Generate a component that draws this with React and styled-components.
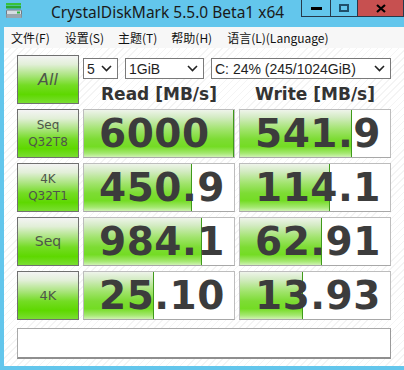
import React from 'react';
import styled, { createGlobalStyle } from 'styled-components';

const GlobalStyle = createGlobalStyle`
  html, body {
    margin: 0;
    padding: 0;
    background: #ffffff;
  }
`;

const Window = styled.div`
  width: 404px;
  height: 370px;
  background: #63c6ec;
  display: flex;
  flex-direction: column;
  overflow: hidden;
  font-family: 'Liberation Sans', Arial, sans-serif;
`;

const TitleBar = styled.div`
  height: 27px;
  display: flex;
  align-items: flex-start;
  flex-shrink: 0;
`;

const AppIcon = styled.svg`
  margin: 3px 0 0 6px;
  flex-shrink: 0;
`;

const TitleText = styled.div`
  margin: 1px 0 0 29px;
  font-family: 'Noto Sans', 'Open Sans', sans-serif;
  font-size: 15.5px;
  line-height: 22px;
  color: #1a1a1a;
  flex: 1;
  white-space: nowrap;
`;

const Caption = styled.div`
  display: flex;
  height: 17px;
`;

const CaptionButton = styled.div`
  width: ${p => p.$w}px;
  height: 16px;
  border: 1px solid #26394a;
  border-top: none;
  border-right: ${p => (p.$last ? '1px solid #26394a' : 'none')};
  background: ${p => (p.$close ? '#c75050' : 'transparent')};
  display: flex;
  align-items: center;
  justify-content: center;
`;

const Body = styled.div`
  flex: 1;
  display: flex;
  flex-direction: column;
  padding: 0 0 4px 4px;
  min-height: 0;
`;

const MenuBar = styled.div`
  height: 21px;
  background: #f7f7f7;
  display: flex;
  align-items: center;
  padding-left: 2px;
  font-family: 'Noto Sans CJK SC', 'Liberation Sans', sans-serif;
  font-size: 12px;
  color: #111;
  flex-shrink: 0;
`;

const MenuItem = styled.span`
  padding: 0 7px 0 5px;
  margin-right: ${p => p.$gap || 0}px;
  line-height: 21px;
`;

const Content = styled.div`
  flex: 1;
  padding: 7px 0 0 13px;
  background: repeating-linear-gradient(
    135deg,
    #ffffff 0px,
    #ffffff 4px,
    #f4f4f4 4px,
    #f4f4f4 5px
  );
`;

const Board = styled.div`
  display: grid;
  grid-template-columns: 62px 152px 152px;
  grid-auto-rows: 49px;
  column-gap: 4px;
  row-gap: 5px;
`;

const LabelButton = styled.div`
  box-sizing: border-box;
  border: 1px solid #707070;
  background: linear-gradient(
    to bottom,
    #f4f4f4 0%,
    #e2efd8 18%,
    #a8e47a 42%,
    #74dc24 62%,
    #5ed800 82%,
    #7ade32 100%
  );
  display: flex;
  flex-direction: column;
  align-items: center;
  justify-content: center;
  color: #4e564a;
  font-family: 'DejaVu Sans', Verdana, sans-serif;
  font-size: ${p => p.$size || 12}px;
  font-style: ${p => (p.$italic ? 'italic' : 'normal')};
  line-height: 17px;
`;

const Controls = styled.div`
  grid-column: 2 / 4;
  display: flex;
  flex-direction: column;
`;

const SelectRow = styled.div`
  display: flex;
  gap: 7px;
  margin-top: 3px;
`;

const Select = styled.div`
  box-sizing: border-box;
  width: ${p => p.$w}px;
  height: 21px;
  border: 1px solid #7a7a7a;
  background: #ffffff;
  display: flex;
  align-items: center;
  padding: 0 5px 0 3px;
  font-size: 14px;
  color: #1e1e1e;
`;

const SelectText = styled.span`
  flex: 1;
  white-space: nowrap;
`;

const HeaderRow = styled.div`
  display: grid;
  grid-template-columns: 152px 152px;
  column-gap: 4px;
  margin-top: 4px;
`;

const ColumnHeader = styled.div`
  text-align: center;
  font-family: 'DejaVu Sans', Verdana, sans-serif;
  font-weight: bold;
  font-size: 17px;
  line-height: 22px;
  color: #333333;
`;

const Cell = styled.div`
  position: relative;
  box-sizing: border-box;
  border: 1px solid #bdbdbd;
  border-bottom-color: #a8a8a8;
  background: #ffffff;
  overflow: hidden;
`;

const Fill = styled.div`
  position: absolute;
  left: 0;
  top: 0;
  bottom: 0;
  box-sizing: border-box;
  border-right: 1px solid #3f9a1a;
  background: linear-gradient(
    to bottom,
    #eef4ea 0%,
    #d3ebc2 16%,
    #a3e470 40%,
    #7ddc34 62%,
    #74dc24 78%,
    #a4e870 92%,
    #cff2b4 100%
  );
`;

const Value = styled.div`
  position: relative;
  height: 100%;
  display: flex;
  align-items: center;
  padding-left: 15px;
  font-family: 'DejaVu Sans', Verdana, sans-serif;
  font-weight: bold;
  font-size: 39px;
  letter-spacing: 0.5px;
  color: #3c3c3c;
`;

const Comment = styled.div`
  box-sizing: border-box;
  width: 374px;
  height: 31px;
  margin-top: 8px;
  background: #ffffff;
  border: 1px solid #a9a9a9;
  border-bottom: 2px solid #8f8f8f;
  border-right-color: #9a9a9a;
`;

const Chevron = () => (
  <svg width="11" height="7" viewBox="0 0 11 7">
    <path d="M1 1 L5.5 5.5 L10 1" fill="none" stroke="#222" strokeWidth="1.6" />
  </svg>
);

const rows = [
  { label: ['Seq', 'Q32T8'], size: 12, read: '6000', readPct: 100, write: '541.9', writePct: 74.7 },
  { label: ['4K', 'Q32T1'], size: 12, read: '450.9', readPct: 72, write: '114.1', writePct: 60 },
  { label: ['Seq'], size: 14, read: '984.1', readPct: 78.7, write: '62.91', writePct: 54.7 },
  { label: ['4K'], size: 13, read: '25.10', readPct: 46.7, write: '13.93', writePct: 42 }
];

const ScoreCell = ({ value, pct }) => (
  <Cell>
    <Fill style={{ width: `${pct}%` }} />
    <Value>{value}</Value>
  </Cell>
);

const App = () => (
  <>
    <GlobalStyle />
    <Window>
      <TitleBar>
        <AppIcon width="16" height="15" viewBox="0 0 16 15">
          <rect x="0" y="0" width="15" height="2.5" fill="#38c23a" />
          <rect x="0" y="3" width="15" height="2.5" fill="#2aa830" />
          <rect x="0.5" y="7" width="15" height="8" rx="1" fill="#d6dde2" stroke="#6d7a84" />
          <rect x="0.5" y="11" width="15" height="4" fill="#9aa6ae" />
          <rect x="11" y="8.5" width="3" height="2" fill="#2ab83a" />
        </AppIcon>
        <TitleText>CrystalDiskMark 5.5.0 Beta1 x64</TitleText>
        <Caption>
          <CaptionButton $w={28}>
            <svg width="11" height="3" viewBox="0 0 11 3">
              <rect width="11" height="3" fill="#000" />
            </svg>
          </CaptionButton>
          <CaptionButton $w={26}>
            <svg width="10" height="8" viewBox="0 0 10 8">
              <rect x="1" y="1" width="8" height="6" fill="none" stroke="#1f4f6a" strokeWidth="2" />
            </svg>
          </CaptionButton>
          <CaptionButton $w={45} $close $last>
            <svg width="10" height="9" viewBox="0 0 10 9">
              <path d="M1 1 L9 8 M9 1 L1 8" stroke="#000" strokeWidth="2.2" />
            </svg>
          </CaptionButton>
        </Caption>
      </TitleBar>
      <Body>
        <MenuBar>
          <MenuItem $gap={3}>文件(F)</MenuItem>
          <MenuItem $gap={2}>设置(S)</MenuItem>
          <MenuItem $gap={2}>主题(T)</MenuItem>
          <MenuItem $gap={3}>帮助(H)</MenuItem>
          <MenuItem>语言(L)(Language)</MenuItem>
        </MenuBar>
        <Content>
          <Board>
            <LabelButton $size={16} $italic>All</LabelButton>
            <Controls>
              <SelectRow>
                <Select $w={35}>
                  <SelectText>5</SelectText>
                  <Chevron />
                </Select>
                <Select $w={79}>
                  <SelectText>1GiB</SelectText>
                  <Chevron />
                </Select>
                <Select $w={180}>
                  <SelectText>C: 24% (245/1024GiB)</SelectText>
                  <Chevron />
                </Select>
              </SelectRow>
              <HeaderRow>
                <ColumnHeader>Read [MB/s]</ColumnHeader>
                <ColumnHeader>Write [MB/s]</ColumnHeader>
              </HeaderRow>
            </Controls>
            {rows.map(row => (
              <React.Fragment key={row.label.join('-')}>
                <LabelButton $size={row.size}>
                  {row.label.map(line => (
                    <span key={line}>{line}</span>
                  ))}
                </LabelButton>
                <ScoreCell value={row.read} pct={row.readPct} />
                <ScoreCell value={row.write} pct={row.writePct} />
              </React.Fragment>
            ))}
          </Board>
          <Comment />
        </Content>
      </Body>
    </Window>
  </>
);

export default App;
